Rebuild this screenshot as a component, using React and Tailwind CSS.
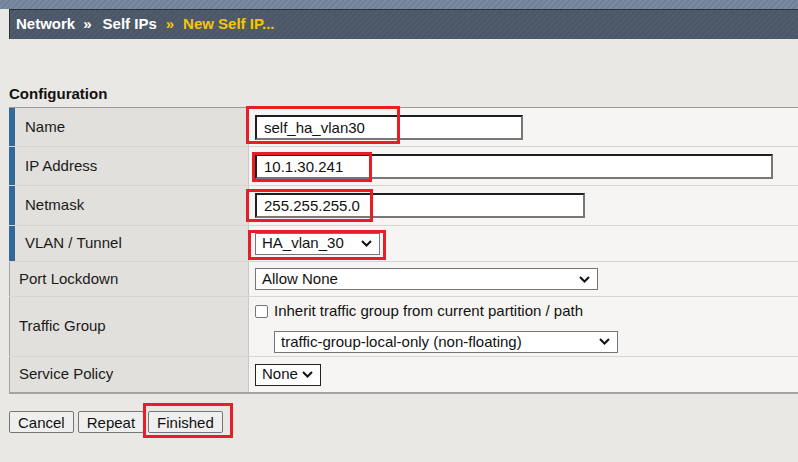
import React from "react";

const font = "font-['Liberation_Sans',Arial,sans-serif]";

function Chevron() {
  return (
    <svg width="11" height="7" viewBox="0 0 11 7" className="shrink-0">
      <polyline points="1,1 5.5,5.5 10,1" fill="none" stroke="#111" strokeWidth="2" />
    </svg>
  );
}

function TextBox({ value, width }) {
  return (
    <input
      readOnly
      value={value}
      className={`${width} h-[25px] bg-white border-2 border-t-[#1e1e1e] border-l-[#1e1e1e] border-b-[#777] border-r-[#777] pl-[7px] text-[15px] text-[#111] outline-none`}
    />
  );
}

function Select({ value, width, border = "border-[#767676]" }) {
  return (
    <div
      className={`${width} h-[22px] bg-white border ${border} flex items-center justify-between pl-[6px] pr-[7px] text-[15px] text-[#111]`}
    >
      <span>{value}</span>
      <Chevron />
    </div>
  );
}

function Row({ label, blue, height, children, last }) {
  return (
    <div
      className={`grid grid-cols-[240px_1fr] ${height} ${
        last ? "" : "border-b border-[#d6d5d1]"
      }`}
    >
      <div
        className={`flex items-center bg-[#e1e0dc] border-r border-[#c9c8c4] text-[15px] text-[#1a1a1a] ${
          blue
            ? "border-l-[6px] border-l-[#34689b] pl-[10px]"
            : "border-l border-l-[#a3a3a3] pl-[9px]"
        }`}
      >
        {label}
      </div>
      <div className="bg-[#f6f5f3] pl-[6px] flex items-center">{children}</div>
    </div>
  );
}

export default function App() {
  return (
    <div className={`relative w-[798px] h-[462px] overflow-hidden bg-[#e9e8e4] ${font}`}>
      <div className="h-[9px] bg-[image:repeating-linear-gradient(135deg,#7a8aa0_0px,#7a8aa0_2px,#708097_2px,#708097_4px)]" />
      <div className="ml-[9px] h-[30px] border-t border-l border-[#2b323b] bg-[image:repeating-linear-gradient(135deg,#505c6b_0px,#505c6b_2px,#4b5766_2px,#4b5766_4px)] flex items-center pl-[6px] text-[15px] font-bold">
        <span className="text-white">Network</span>
        <span className="text-white ml-[8px]">»</span>
        <span className="text-white ml-[11px]">Self IPs</span>
        <span className="text-[#f7c600] ml-[9px]">»</span>
        <span className="text-[#f7c600] ml-[9px]">New Self IP...</span>
      </div>

      <div className="mt-[46px] ml-[9px] h-[18px] leading-[18px] text-[15px] font-bold text-[#111]">
        Configuration
      </div>

      <div className="mt-[4px] ml-[9px] border-t border-[#9a9a9a] border-b-2 border-b-[#a4a4a4]">
        <Row label="Name" blue height="h-[39px]">
          <TextBox value="self_ha_vlan30" width="w-[268px]" />
        </Row>
        <Row label="IP Address" blue height="h-[39px]">
          <TextBox value="10.1.30.241" width="w-[518px]" />
        </Row>
        <Row label="Netmask" blue height="h-[40px]">
          <TextBox value="255.255.255.0" width="w-[330px]" />
        </Row>
        <Row label="VLAN / Tunnel" blue height="h-[36px]">
          <Select value="HA_vlan_30" width="w-[125px]" />
        </Row>
        <Row label="Port Lockdown" height="h-[35px]">
          <Select value="Allow None" width="w-[343px]" />
        </Row>
        <Row label="Traffic Group" height="h-[60px]">
          <div className="flex flex-col gap-[8px] text-[15px] text-[#111]">
            <div className="flex items-center gap-[6px]">
              <div className="w-[13px] h-[13px] bg-white border border-[#767676] rounded-[2px]" />
              <span>Inherit traffic group from current partition / path</span>
            </div>
            <div className="pl-[19px]">
              <Select value="traffic-group-local-only (non-floating)" width="w-[344px]" />
            </div>
          </div>
        </Row>
        <Row label="Service Policy" height="h-[35px]" last>
          <Select value="None" width="w-[66px]" border="border-[#222]" />
        </Row>
      </div>

      <div className="mt-[17px] ml-[9px] flex gap-[4px]">
        {["Cancel", "Repeat", "Finished"].map((b) => (
          <button
            key={b}
            className="h-[22px] px-[8px] bg-[#efefef] border border-[#767676] rounded-[2px] text-[15px] text-[#111] leading-none"
          >
            {b}
          </button>
        ))}
      </div>

      {/* red annotation boxes */}
      <div className="absolute left-[246px] top-[106px] w-[154px] h-[38px] border-[3px] border-[#e81d25]" />
      <div className="absolute left-[252px] top-[152px] w-[120px] h-[30px] border-[3px] border-[#e81d25]" />
      <div className="absolute left-[246px] top-[189px] w-[127px] h-[33px] border-[3px] border-[#e81d25]" />
      <div className="absolute left-[248px] top-[230px] w-[138px] h-[30px] border-[3px] border-[#e81d25]" />
      <div className="absolute left-[143px] top-[403px] w-[90px] h-[35px] border-[3px] border-[#e81d25]" />
    </div>
  );
}
